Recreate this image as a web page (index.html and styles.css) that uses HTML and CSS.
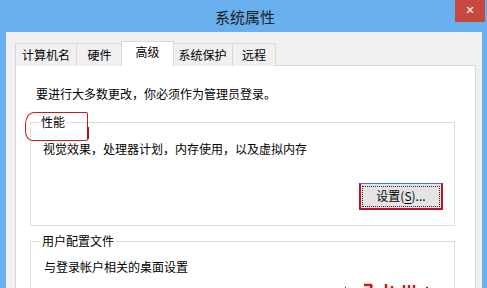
FILE: index.html
```html
<!DOCTYPE html>
<html lang="zh-CN">
<head>
<meta charset="utf-8">
<title>系统属性</title>
<link rel="stylesheet" href="styles.css">
</head>
<body>
<div class="window">
  <div class="titlebar">
    <span class="title">系统属性</span>
    <div class="close">✕</div>
  </div>
  <div class="frame">
    <div class="tabs">
      <div class="tab t1">计算机名</div>
      <div class="tab t2">硬件</div>
      <div class="tab active t3">高级</div>
      <div class="tab t4">系统保护</div>
      <div class="tab t5">远程</div>
    </div>
    <div class="panel">
      <p class="intro">要进行大多数更改，你必须作为管理员登录。</p>
      <div class="group g1">
        <span class="legend">性能</span>
        <p class="desc">视觉效果，处理器计划，内存使用，以及虚拟内存</p>
        <div class="actions">
          <button class="btn">设置(<u>S</u>)...</button>
        </div>
      </div>
      <div class="group g2">
        <span class="legend">用户配置文件</span>
        <p class="desc">与登录帐户相关的桌面设置</p>
      </div>
      <div class="mark"></div>
      <svg class="watermark" width="90" height="8" viewBox="0 0 90 8">
        <g fill="none" stroke="#d01818" stroke-width="2.4">
          <path d="M3 6 L4 6"/>
          <path d="M22 3 L30 3 M30 3 L28 8"/>
          <path d="M44 2 L44 8 M50 4 L50 8"/>
          <path d="M62 3 L62 8 M67 3 L67 8 M72 3 L72 8"/>
          <path d="M84 6 L86 6"/>
        </g>
      </svg>
    </div>
  </div>
</div>
</body>
</html>
```

FILE: styles.css
```css
* { box-sizing: border-box; }
html, body {
  margin: 0;
  padding: 0;
  width: 487px;
  height: 288px;
  overflow: hidden;
  font-family: "Noto Sans CJK SC", "Noto Sans", sans-serif;
  font-size: 12px;
  line-height: 16px;
  color: #000;
}
.window {
  width: 487px;
  height: 288px;
  background: #68b0ee;
  display: flex;
  flex-direction: column;
  overflow: hidden;
}
.titlebar {
  position: relative;
  height: 32px;
  flex: none;
  display: flex;
  align-items: center;
  justify-content: center;
}
.title {
  font-size: 15px;
  line-height: 20px;
  color: #1b1b1b;
  margin-left: 3px;
  margin-top: 2px;
}
.close {
  position: absolute;
  top: 0;
  right: 2px;
  width: 30px;
  height: 22px;
  background: #c8483f;
  color: #fff;
  font-size: 11px;
  line-height: 22px;
  text-align: center;
  font-family: "DejaVu Sans", sans-serif;
}
.frame {
  flex: 1;
  margin: 0 5px 0 6px;
  background: #f0f0f0;
  padding: 9px 6px 0 9px;
  display: flex;
  flex-direction: column;
  min-height: 0;
}
.tabs {
  display: flex;
  align-items: flex-end;
  height: 25px;
  margin-bottom: -1px;
  position: relative;
  z-index: 2;
}
.tab {
  height: 23px;
  border: 1px solid #d9d9d9;
  border-bottom: none;
  background: #f0f0f0;
  line-height: 21px;
  text-align: center;
  margin-left: -1px;
}
.tab:first-child { margin-left: 0; }
.t1 { width: 62px; }
.t2 { width: 47px; }
.t3 { width: 53px; }
.t4 { width: 61px; }
.t5 { width: 44px; }
.tab.active {
  height: 25px;
  background: #fff;
  line-height: 19px;
  margin-left: -2px;
  margin-right: -1px;
  position: relative;
  z-index: 3;
}
.panel {
  flex: 1;
  background: #fff;
  border: 1px solid #d9d9d9;
  border-bottom: none;
  padding: 20px 20px 0 14px;
  position: relative;
  overflow: hidden;
}
.intro {
  margin: 0 0 0 6px;
}
.group {
  border: 1px solid #dcdcdc;
  margin-top: 20px;
}
.g1 { padding: 0 11px 15px 12px; }
.g2 { margin-top: 15px; padding: 0 11px 20px 13px; }
.legend {
  display: block;
  width: fit-content;
  margin: -9px 0 0 -4px;
  padding: 0 2px;
  background: #fff;
}
.desc {
  margin: 10px 0 0 0;
}
.g1 .desc { margin-top: 11px; }
.actions {
  display: flex;
  justify-content: flex-end;
  margin-top: 26px;
}
.btn {
  width: 84px;
  height: 27px;
  font-family: inherit;
  font-size: 12px;
  line-height: 16px;
  background: #e4e4e4;
  border: 2px solid #b8142e;
  border-top: 1px solid #3d7bbf;
  outline: 1px dotted #5a1a1a;
  outline-offset: -4px;
  padding: 0;
  color: #000;
}
.btn u { text-underline-offset: 2px; }
.mark {
  position: absolute;
  left: 9px;
  top: 46px;
  width: 63px;
  height: 29px;
  border: 1.5px solid #d0191c;
  border-radius: 9px 2px 2px 7px / 12px 2px 2px 10px;
  z-index: 5;
}
.mark::after {
  content: "";
  position: absolute;
  right: -2px;
  top: 14px;
  width: 2.5px;
  height: 12px;
  background: #b01010;
}
.watermark {
  position: absolute;
  left: 326px;
  top: 216px;
}
```
